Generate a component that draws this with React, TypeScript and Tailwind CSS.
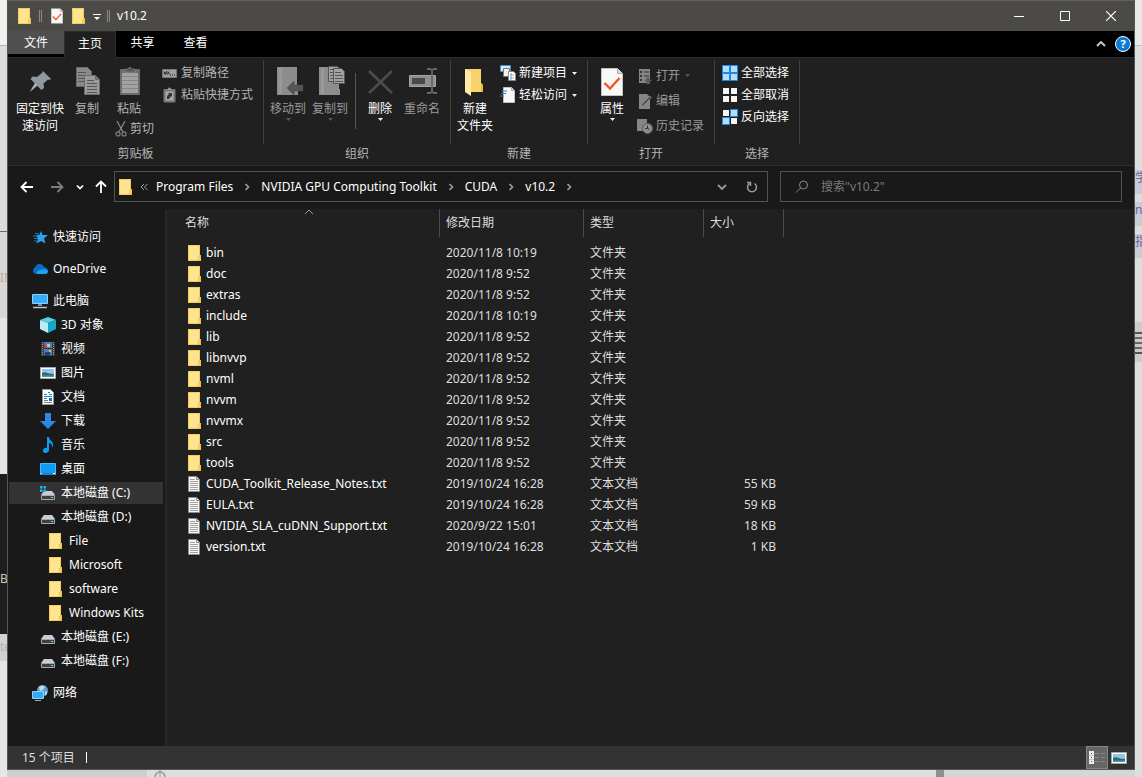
import React from 'react';
import { clsx } from 'clsx';

interface IconProps {
  className?: string;
}

function cn(...parts: (string | undefined)[]) {
  return clsx('shrink-0', parts);
}

/* ---------- Shared icons ---------- */

const FolderIcon = ({ className = 'w-4 h-4' }: IconProps) => (
  <svg viewBox="0 0 16 16" className={cn(className)}>
    <path d="M1 0h12v10h1v6H1z" fill="#ffe48f" />
    <path d="M1.500.5h11v15h-11z" fill="none" stroke="#f3cd55" />
    <path d="M11.500 15.500v-4l2-1v5z" fill="#fbd968" stroke="#e3b838" strokeWidth=".7" />
  </svg>
);

const TextFileIcon = ({ className = 'w-4 h-4' }: IconProps) => (
  <svg viewBox="0 0 16 16" className={cn(className)}>
    <path d="M1.500.5h8l3 3v12h-11z" fill="#f7f7f7" stroke="#8c8c8c" />
    <path d="M9.500.5v3h3" fill="#ddd" stroke="#8c8c8c" />
    <path d="M3 3.500h5M3 5.500h8M3 7.500h8M3 9.500h8M3 11.500h8M3 13.500h8" stroke="#a2a2a2" />
  </svg>
);

const CheckPageIcon = ({ className }: IconProps) => (
  <svg viewBox="0 0 22 28" className={cn(className)}>
    <path d="M.5.5h16l5 5v22H.5z" fill="#f8f8f8" stroke="#c4c4c4" />
    <path d="M16.500.5v5h5" fill="#ddd" stroke="#a9a9a9" />
    <path d="M3.500 15l5.500 5.500L18.500 10" fill="none" stroke="#f0591e" strokeWidth="2.400" />
  </svg>
);

const Caret = ({ className }: IconProps) => (
  <svg viewBox="0 0 5 3" className={cn('w-[5px] h-[3px]', className)}>
    <path d="M0 0h5L2.500 3z" fill="currentColor" />
  </svg>
);

const Chevron = ({ className }: IconProps) => (
  <svg viewBox="0 0 8 8" className={cn('w-2 h-2', className)}>
    <path d="M1 2.500l3 3 3-3" fill="none" stroke="currentColor" strokeWidth="1.700" />
  </svg>
);

/* ---------- Ribbon icons ---------- */

const PinIcon = () => (
  <svg viewBox="0 0 32 32" className="w-8 h-8">
    <path d="M19 5l8 8-2 1-1-.5-4.500 4 .5 4.500-2.500 2-5-5L6 25l2-3 3-4.500-4.500-4.500 2-2.500 4.500.5 5-4z" fill="#8d9aa5" />
    <path d="M11 17l2.500 2.500L6 26z" fill="#a5b0b8" />
  </svg>
);

const CopyIcon = () => (
  <svg viewBox="0 0 32 32" className="w-8 h-8">
    <g stroke="#6a6a6a">
      <path d="M5.500 1.500h11l4 4v15h-15z" fill="#8a8a8a" />
      <path d="M7 6.500h8M7 9.500h10M7 12.500h10M7 15.500h10" stroke="#555" />
      <path d="M13.500 9.500h11l4 4v15h-15z" fill="#9a9a9a" />
      <path d="M24.500 9.500v4h4" fill="#777" />
      <path d="M16 14.500h7M16 17.500h10M16 20.500h10M16 23.500h10M16 26.500h10" stroke="#555" />
    </g>
  </svg>
);

const PasteIcon = () => (
  <svg viewBox="0 0 28 32" className="w-7 h-8">
    <rect x="5" y="3" width="20" height="26" rx="1" fill="#6c6c6c" />
    <path d="M7 7h16v20H7z" fill="#a2a2a2" />
    <path d="M7 10.500h16M7 14.500h16M7 18.500h16M7 22.500h16" stroke="#868686" />
    <path d="M9 6l2-3h2l2-2 2 2h2l2 3z" fill="#555" stroke="#999" strokeWidth=".6" />
  </svg>
);

const ScissorsIcon = () => (
  <svg viewBox="0 0 12 16" className="w-3 h-4">
    <path d="M2 0l6 11M10 0L4 11" stroke="#8b8b8b" fill="none" strokeWidth="1.200" />
    <circle cx="3" cy="13" r="2" fill="none" stroke="#777" strokeWidth="1.300" />
    <circle cx="9" cy="13" r="2" fill="none" stroke="#777" strokeWidth="1.300" />
  </svg>
);

const CopyPathIcon = () => (
  <svg viewBox="0 0 16 16" className="w-4 h-4">
    <path d="M.5 4.500h14v8H.5z" fill="#a0a0a0" stroke="#777" />
    <path d="M2 6.500l1 3 1.500-3 1 3M6 6.500l1.500 3" stroke="#222" fill="none" />
    <path d="M8 10h1M10 10h1M12 10h1" stroke="#222" />
  </svg>
);

const PasteShortcutIcon = () => (
  <svg viewBox="0 0 16 16" className="w-4 h-4">
    <rect x="1.500" y="2" width="12" height="13.500" rx="1" fill="#777" />
    <path d="M3.500 4.500h8v9h-8z" fill="#aaa" />
    <path d="M5 3l2-2.500h1L10 3z" fill="#999" />
    <path d="M5 12V9l2-2-1-1h4v4L9 9l-2 3z" fill="#333" />
  </svg>
);

const MoveToIcon = () => (
  <svg viewBox="0 0 32 32" className="w-8 h-8">
    <path d="M5 1h20v22h1v6H5z" fill="#8d8d8d" />
    <path d="M7 2h3v26H7z" fill="#999" />
    <path d="M15 22l7-7v4h9v6h-9v4z" fill="#565656" stroke="#444" strokeWidth=".6" />
  </svg>
);

const CopyToIcon = () => (
  <svg viewBox="0 0 32 32" className="w-8 h-8">
    <path d="M5 1h20v22h1v6H5z" fill="#8d8d8d" />
    <path d="M7 2h3v26H7z" fill="#999" />
    <g stroke="#555">
      <path d="M14.500.5h9l2 3v12h-11z" fill="#a2a2a2" />
      <path d="M19.500 2.500h8l3 3v12h-11z" fill="#a2a2a2" />
      <path d="M16 3.500h3M16 6.500h3M16 9.500h3M16 12.500h3M21 6.500h6M21 9.500h8M21 12.500h8M21 15.500h8" />
    </g>
  </svg>
);

const DeleteIcon = () => (
  <svg viewBox="0 0 32 32" className="w-8 h-8">
    <path d="M5 5l23 22M28 5L5 27" stroke="#4c4c4c" strokeWidth="2.600" />
  </svg>
);

const RenameIcon = () => (
  <svg viewBox="0 0 32 32" className="w-8 h-8">
    <path d="M3.500 9.500h26v11h-26z" fill="#8f8f8f" stroke="#a3a3a3" />
    <path d="M6 12h13v6H6z" fill="#4a4a4a" />
    <path d="M21 3h3l2 1 2-1h3M26 4v22M21 27h3l2-1 2 1h3" fill="none" stroke="#686868" strokeWidth="1.800" />
  </svg>
);

const NewFolderIcon = () => (
  <svg viewBox="0 0 32 32" className="w-8 h-8">
    <path d="M6 3h16v14l2 2v7H11z" fill="#f8d36b" />
    <path d="M6 3l6 3v24l-6-4z" fill="#ffe9a6" />
    <path d="M22 17l2 2v7h-2z" fill="#e6b93f" />
  </svg>
);

const NewItemIcon = () => (
  <svg viewBox="0 0 16 16" className="w-4 h-4">
    <path d="M.5.500h10v6H.5z" fill="#d9ecf8" stroke="#3f93c8" />
    <path d="M3.500 3.500h6v8h-6z" fill="#f2f2f2" stroke="#777" />
    <path d="M8.500 6.500h5l2 2v7h-7z" fill="#fff" stroke="#888" />
    <path d="M10 10h4M10 13h4" stroke="#d08a9c" />
    <path d="M11 8v7" stroke="#7ba3d8" />
  </svg>
);

const EasyAccessIcon = () => (
  <svg viewBox="0 0 16 16" className="w-4 h-4">
    <path d="M3.500.5h8l3 3v12h-11z" fill="#f8f8f8" stroke="#c0c0c0" />
    <path d="M11.500.5v3h3" fill="#ccc" stroke="#aaa" />
    <path d="M2 4h5M1 6.500h5M0 9h4" stroke="#2b7fc6" strokeWidth="1.200" />
  </svg>
);

const OpenIcon = () => (
  <svg viewBox="0 0 16 16" className="w-4 h-4">
    <path d="M2 1h11v14H2z" fill="#858585" />
    <path d="M3 3h2v2H3zM3 7h2v2H3zM3 11h2v2H3zM7 3.500h5v1H7zM7 7.500h5v1H7z" fill="#333" />
    <path d="M9 16v-3h-2l4-4 4 4h-2v3z" fill="#5d5d5d" />
  </svg>
);

const EditIcon = () => (
  <svg viewBox="0 0 16 16" className="w-4 h-4">
    <path d="M2 1h8l3 3v12H2z" fill="#858585" />
    <path d="M4 14l1-3 8-8 1.500 1.500-8 8z" fill="#4b4b4b" stroke="#a5a5a5" strokeWidth=".5" />
  </svg>
);

const HistoryIcon = () => (
  <svg viewBox="0 0 16 16" className="w-4 h-4">
    <path d="M0 1h10v12H0z" fill="#858585" />
    <circle cx="10.500" cy="10.500" r="5" fill="#8f8f8f" stroke="#5c5c5c" />
    <path d="M10.500 7.500v3l2 1M8 10.500h2" fill="none" stroke="#333" />
  </svg>
);

// One 8px tile per quadrant, a selected tile gets the blue frame
const SelectIcon = ({ on }: { on: boolean[] }) => (
  <svg viewBox="0 0 16 16" className="w-4 h-4 shrink-0">
    {on.map((picked, i) => {
      const x = (i % 2) * 8;
      const y = Math.floor(i / 2) * 8;
      return (
        <g key={i}>
          {picked && <rect x={x} y={y} width="8" height="8" fill="#1f87dc" />}
          <rect x={x + 1} y={y + 1} width="6" height="6" fill={picked ? '#b5dcf8' : '#f5f5f5'} />
        </g>
      );
    })}
  </svg>
);

/* ---------- Sidebar icons ---------- */

const StarIcon = () => (
  <svg viewBox="0 0 16 16" className="w-4 h-4">
    <path d="M9 2l1.500 4L16 6l-4 3.500 1.500 5L9 12l-4.500 2.500L6 10 4 6l3.500-.2z" fill="#2ba3f5" />
    <path d="M3 4.500h4M1 7h5M2 9.500h4M2 12h3" stroke="#1a78c4" />
  </svg>
);

const CloudIcon = () => (
  <svg viewBox="0 0 16 16" className="w-4 h-4">
    <path d="M3.500 13A3.500 3.500 0 013 6.500 4.800 4.800 0 0112 6c2.500.5 4 2 4 4s-1.500 3-3 3z" fill="#0a6cc4" />
    <path d="M5 13c-1-1 0-3 3-4 3-1.500 6-1 8 1 0 2-1.500 3-3 3z" fill="#27a0ec" />
  </svg>
);

const PcIcon = () => (
  <svg viewBox="0 0 16 16" className="w-4 h-4">
    <path d="M.5 1.500h15v9H.5z" fill="#35aaf7" stroke="#8ed1fb" />
    <path d="M6 11h4v2H6z" fill="#7c8b97" />
    <path d="M1 14.500h14" stroke="#b9c5ce" strokeWidth="1.500" />
  </svg>
);

const CubeIcon = () => (
  <svg viewBox="0 0 16 16" className="w-4 h-4">
    <path d="M8 0l8 3-8 3-8-3z" fill="#58d3e3" />
    <path d="M0 3l8 3v10l-8-4z" fill="#b5eef3" />
    <path d="M16 3L8 6v10l8-4z" fill="#16a6c6" />
  </svg>
);

const VideoIcon = () => (
  <svg viewBox="0 0 16 16" className="w-4 h-4">
    <path d="M1 1h14v14H1z" fill="#3c3c3c" />
    <path d="M2.500 1v14M13.500 1v14" stroke="#999" strokeDasharray="1 1" />
    <path d="M4 1h8v6H4zM4 8h8v6H4z" fill="#3f7fd6" />
    <path d="M4 4h3v3H4z" fill="#c33b4d" />
    <path d="M7 3h3v3H7z" fill="#f2c531" />
    <path d="M5 11h5v3H5z" fill="#25406c" />
    <path d="M9 9h2v2H9z" fill="#e6bd3a" />
  </svg>
);

const PictureIcon = () => (
  <svg viewBox="0 0 16 16" className="w-4 h-4">
    <path d="M.5 2.500h15v11H.5z" fill="#fff" stroke="#a9a9a9" />
    <path d="M2 4h12v8H2z" fill="#8fc4f5" />
    <path d="M2 8c3-2 5 1 12 1v3H2z" fill="#2f6f5f" />
    <path d="M2 10.500h12V12H2z" fill="#5b91b5" />
  </svg>
);

const DocIcon = () => (
  <svg viewBox="0 0 16 16" className="w-4 h-4">
    <path d="M2.500.5h8l3 3v12h-11z" fill="#fff" stroke="#999" />
    <path d="M8 3.500h2M4 5.500h3M9 5.500h3M4 7.500h8M4 9.500h3" stroke="#2180cc" />
    <path d="M9 9h3v3H9z" fill="#2a72a8" />
    <path d="M4 11.500h4M4 13.500h8" stroke="#777" />
  </svg>
);

const DownloadIcon = () => (
  <svg viewBox="0 0 16 16" className="w-4 h-4">
    <path d="M5 0h6v8h5l-8 8-8-8h5z" fill="#2d87e0" />
  </svg>
);

const MusicIcon = () => (
  <svg viewBox="0 0 16 16" className="w-4 h-4">
    <path d="M7 0h2c0 4 5 4 4 9-.5 1-1 2-1 1 0-3-1-4-3-4v7c0 2-2 3-4 3S2 13 4 11.500c1-.8 2-1 3-.500z" fill="#109cf5" />
  </svg>
);

const DesktopIcon = () => (
  <svg viewBox="0 0 16 16" className="w-4 h-4">
    <path d="M.5 2.500h15v11H.5z" fill="#109cf5" stroke="#47b8fb" />
    <path d="M1 13h14" stroke="#0a5da0" />
    <path d="M1 12.500h1M13 12.500h2" stroke="#fff" />
  </svg>
);

const DriveIcon = ({ system }: { system?: boolean }) => (
  <svg viewBox="0 0 16 16" className="w-4 h-4">
    <path d="M4 6h8l3 4H1z" fill="#c9ccd0" />
    <path d="M1.500 10.500h13v4h-13z" fill="#3e4144" stroke="#a7abae" />
    <path d="M11 12.500h2" stroke="#4ff06a" strokeWidth="1.200" />
    {system && <path d="M0 1h2.500v2.500H0zM3.500 1H6v2.500H3.500zM0 4.500h2.500V7H0zM3.500 4.500H6V7H3.500z" fill="#22b3f0" />}
  </svg>
);

const NetworkIcon = () => (
  <svg viewBox="0 0 16 16" className="w-4 h-4">
    <circle cx="10.500" cy="5.500" r="5.500" fill="#5f9fc4" />
    <path d="M7 2c2-2 5-1 6 0l-2 3-3 1zM13 7l2-1v3l-2 2z" fill="#b8dbe8" />
    <path d="M.5 6.500h11v7H.5z" fill="#35aaf7" stroke="#8ed1fb" />
    <path d="M3 15.500h6" stroke="#9db2c0" />
  </svg>
);

/* ---------- Data ---------- */

const files = [
  { name: 'bin', date: '2020/11/8 10:19', folder: true },
  { name: 'doc', date: '2020/11/8 9:52', folder: true },
  { name: 'extras', date: '2020/11/8 9:52', folder: true },
  { name: 'include', date: '2020/11/8 10:19', folder: true },
  { name: 'lib', date: '2020/11/8 9:52', folder: true },
  { name: 'libnvvp', date: '2020/11/8 9:52', folder: true },
  { name: 'nvml', date: '2020/11/8 9:52', folder: true },
  { name: 'nvvm', date: '2020/11/8 9:52', folder: true },
  { name: 'nvvmx', date: '2020/11/8 9:52', folder: true },
  { name: 'src', date: '2020/11/8 9:52', folder: true },
  { name: 'tools', date: '2020/11/8 9:52', folder: true },
  { name: 'CUDA_Toolkit_Release_Notes.txt', date: '2019/10/24 16:28', size: '55 KB' },
  { name: 'EULA.txt', date: '2019/10/24 16:28', size: '59 KB' },
  { name: 'NVIDIA_SLA_cuDNN_Support.txt', date: '2020/9/22 15:01', size: '18 KB' },
  { name: 'version.txt', date: '2019/10/24 16:28', size: '1 KB' },
];

const places = [
  [{ label: '快速访问', icon: <StarIcon />, depth: 0 }],
  [{ label: 'OneDrive', icon: <CloudIcon />, depth: 0 }],
  [
    { label: '此电脑', icon: <PcIcon />, depth: 0 },
    { label: '3D 对象', icon: <CubeIcon />, depth: 1 },
    { label: '视频', icon: <VideoIcon />, depth: 1 },
    { label: '图片', icon: <PictureIcon />, depth: 1 },
    { label: '文档', icon: <DocIcon />, depth: 1 },
    { label: '下载', icon: <DownloadIcon />, depth: 1 },
    { label: '音乐', icon: <MusicIcon />, depth: 1 },
    { label: '桌面', icon: <DesktopIcon />, depth: 1 },
    { label: '本地磁盘 (C:)', icon: <DriveIcon system />, depth: 1, active: true },
    { label: '本地磁盘 (D:)', icon: <DriveIcon />, depth: 1 },
    { label: 'File', icon: <FolderIcon />, depth: 2 },
    { label: 'Microsoft', icon: <FolderIcon />, depth: 2 },
    { label: 'software', icon: <FolderIcon />, depth: 2 },
    { label: 'Windows Kits', icon: <FolderIcon />, depth: 2 },
    { label: '本地磁盘 (E:)', icon: <DriveIcon />, depth: 1 },
    { label: '本地磁盘 (F:)', icon: <DriveIcon />, depth: 1 },
  ],
  [{ label: '网络', icon: <NetworkIcon />, depth: 0 }],
];

const indents = ['pl-[23px]', 'pl-[31px]', 'pl-[39px]'];
const crumbs = ['Program Files', 'NVIDIA GPU Computing Toolkit', 'CUDA', 'v10.2'];

/* ---------- Ribbon parts ---------- */

interface GroupProps {
  label: string;
  className: string;
  children: React.ReactNode;
}

const Group = ({ label, className, children }: GroupProps) => (
  <section className="flex shrink-0">
    <div className={clsx('flex flex-col', className)}>
      <div className="flex flex-1">{children}</div>
      <div className="text-center leading-5 pb-px text-[#b4b4b4]">{label}</div>
    </div>
    <div className="w-px h-[84px] mt-[2px] bg-[#404040]" />
  </section>
);

interface BigButtonProps {
  icon: React.ReactNode;
  lines: string[];
  className: string;
  caret?: string;
}

const BigButton = ({ icon, lines, className, caret }: BigButtonProps) => (
  <button className={clsx('flex flex-col items-center pt-2 whitespace-nowrap', className)}>
    {icon}
    <span className="mt-[2px] leading-[17px]">
      {lines.map((line) => (
        <span key={line} className="block">{line}</span>
      ))}
    </span>
    {caret && <Caret className={clsx('mt-px', caret)} />}
  </button>
);

interface SmallButtonProps {
  icon: React.ReactNode;
  label: string;
  className: string;
  caret?: string;
}

const SmallButton = ({ icon, label, className, caret }: SmallButtonProps) => (
  <button className={clsx('flex items-center gap-[3px] whitespace-nowrap', className)}>
    {icon}
    {label}
    {caret && <Caret className={clsx('ml-[2px]', caret)} />}
  </button>
);

const Ribbon = () => (
  <div className="flex h-[109px] border-y border-[#2e2e2e] bg-[#202020] overflow-hidden">
    <Group label="剪贴板" className="w-[255px]">
      <BigButton icon={<PinIcon />} lines={['固定到快', '速访问']} className="w-12 ml-2" />
      <BigButton icon={<CopyIcon />} lines={['复制']} className="w-[42px] ml-[2px] text-[#b4b4b4]" />
      <div className="ml-[7px] w-10 text-[#b4b4b4]">
        <BigButton icon={<PasteIcon />} lines={['粘贴']} className="w-7" />
        <SmallButton icon={<ScissorsIcon />} label="剪切" className="h-5 mt-[2px]" />
      </div>
      <div className="ml-[7px] pt-1 text-[#b4b4b4]">
        <SmallButton icon={<CopyPathIcon />} label="复制路径" className="h-[22px]" />
        <SmallButton icon={<PasteShortcutIcon />} label="粘贴快捷方式" className="h-[22px]" />
      </div>
    </Group>
    <Group label="组织" className="w-[186px]">
      <BigButton icon={<MoveToIcon />} lines={['移动到']} className="w-[42px] ml-[3px] text-[#999]" caret="text-[#555]" />
      <BigButton icon={<CopyToIcon />} lines={['复制到']} className="w-[42px] text-[#999]" caret="text-[#555]" />
      <div className="w-px h-[56px] mt-[15px] ml-1 bg-[#555]" />
      <BigButton icon={<DeleteIcon />} lines={['删除']} className="w-[42px] ml-[3px]" caret="text-[#eee]" />
      <BigButton icon={<RenameIcon />} lines={['重命名']} className="w-[42px] text-[#999]" />
    </Group>
    <Group label="新建" className="w-[136px]">
      <BigButton icon={<NewFolderIcon />} lines={['新建', '文件夹']} className="w-[42px] ml-[3px]" />
      <div className="ml-1 pt-1">
        <SmallButton icon={<NewItemIcon />} label="新建项目" className="h-[22px]" caret="text-[#eee]" />
        <SmallButton icon={<EasyAccessIcon />} label="轻松访问" className="h-[22px]" caret="text-[#eee]" />
      </div>
    </Group>
    <Group label="打开" className="w-[126px]">
      <BigButton icon={<CheckPageIcon className="w-[22px] h-8" />} lines={['属性']} className="w-9 ml-[6px]" caret="text-[#eee]" />
      <div className="ml-[7px] pt-[5px] text-[#999]">
        <SmallButton icon={<OpenIcon />} label="打开" className="h-[25px]" caret="text-[#555]" />
        <SmallButton icon={<EditIcon />} label="编辑" className="h-[25px]" />
        <SmallButton icon={<HistoryIcon />} label="历史记录" className="h-[25px]" />
      </div>
    </Group>
    <Group label="选择" className="w-[84px]">
      <div className="ml-[7px] pt-1">
        <SmallButton icon={<SelectIcon on={[true, true, true, true]} />} label="全部选择" className="h-[22px]" />
        <SmallButton icon={<SelectIcon on={[false, false, false, false]} />} label="全部取消" className="h-[22px]" />
        <SmallButton icon={<SelectIcon on={[false, true, true, false]} />} label="反向选择" className="h-[22px]" />
      </div>
    </Group>
  </div>
);

/* ---------- Window chrome ---------- */

const TitleBar = () => (
  <header className="flex items-center h-[31px] border-t border-[#62615d] bg-[#4b4a46]">
    <FolderIcon className="w-4 h-4 ml-[9px]" />
    <div className="w-[3px] h-3 mx-[6px] border-x border-[#8a8985]" />
    <button aria-label="属性" className="ml-[3px]"><CheckPageIcon className="w-3 h-4" /></button>
    <button aria-label="新建文件夹" className="ml-2"><FolderIcon /></button>
    <button aria-label="自定义快速访问工具栏" className="ml-[6px]">
      <svg viewBox="0 0 8 8" className="w-2 h-2">
        <path d="M0 2.500h8" stroke="#fff" />
        <path d="M1 5h6L4 8z" fill="#fff" />
      </svg>
    </button>
    <div className="w-[3px] h-3 mx-[6px] border-x border-[#8a8985]" />
    <h1 className="flex-1 pl-px">v10.2</h1>
    <button aria-label="最小化" className="w-[46px] h-full flex items-center justify-center">
      <svg viewBox="0 0 10 10" className="w-[10px] h-[10px]"><path d="M0 5.500h10" stroke="#fff" /></svg>
    </button>
    <button aria-label="最大化" className="w-[46px] h-full flex items-center justify-center">
      <svg viewBox="0 0 10 10" className="w-[10px] h-[10px]"><path d="M.5.5h9v9h-9z" fill="none" stroke="#fff" /></svg>
    </button>
    <button aria-label="关闭" className="w-[46px] h-full flex items-center justify-center">
      <svg viewBox="0 0 10 10" className="w-[10px] h-[10px]"><path d="M0 0l10 10M10 0L0 10" stroke="#fff" strokeWidth="1.200" /></svg>
    </button>
  </header>
);

const Tabs = () => (
  <nav className="flex h-[26px] bg-black">
    <button className="w-14 h-[23px] bg-[#4f4f4f]">文件</button>
    <button className="w-[52px] h-[27px] pb-[3px] border border-b-0 border-[#2e2e2e] bg-[#202020] relative z-10">主页</button>
    <button className="w-[53px] h-[24px]">共享</button>
    <button className="w-[53px] h-[24px]">查看</button>
    <div className="flex-1" />
    <button aria-label="最小化功能区" className="mr-[9px] text-[#c4c4c4]">
      <svg viewBox="0 0 10 6" className="w-[10px] h-[6px]">
        <path d="M1 5l4-4 4 4" fill="none" stroke="currentColor" strokeWidth="2" />
      </svg>
    </button>
    <button aria-label="帮助" className="mr-[3px] self-center w-4 h-4 rounded-full border border-white bg-[#0b7bd8] text-[11px] leading-[14px] font-bold">?</button>
  </nav>
);

const NavBar = () => (
  <div className="flex items-center h-[43px] pr-3 pb-[2px] bg-[#191919]">
    <div className="flex items-center w-[106px] shrink-0">
      <button aria-label="后退" className="ml-3">
        <svg viewBox="0 0 14 14" className="w-[14px] h-[14px]">
          <path d="M13 7H2M6.500 2L1.500 7l5 5" fill="none" stroke="#fff" strokeWidth="1.800" />
        </svg>
      </button>
      <button aria-label="前进" className="ml-4">
        <svg viewBox="0 0 14 14" className="w-[14px] h-[14px]">
          <path d="M1 7h11M7.500 2l5 5-5 5" fill="none" stroke="#7d7d7d" strokeWidth="1.800" />
        </svg>
      </button>
      <button aria-label="最近浏览的位置" className="ml-3"><Chevron /></button>
      <button aria-label="上移" className="ml-[10px]">
        <svg viewBox="0 0 14 14" className="w-[14px] h-[14px]">
          <path d="M7 13V2M2 6.500l5-5 5 5" fill="none" stroke="#fff" strokeWidth="1.800" />
        </svg>
      </button>
    </div>
    <div className="flex flex-1 items-center h-[31px] border border-[#535353] min-w-0">
      <FolderIcon className="w-4 h-4 ml-[3px]" />
      <svg viewBox="0 0 8 8" className="w-2 h-2 ml-[6px] mr-2 shrink-0 text-[#9a9a9a]">
        <path d="M4 1L1 4l3 3M7.500 1l-3 3 3 3" fill="none" stroke="currentColor" />
      </svg>
      {crumbs.map((crumb) => (
        <React.Fragment key={crumb}>
          <button className="whitespace-nowrap">{crumb}</button>
          <Chevron className="mx-[10px] -rotate-90 text-[#9a9a9a]" />
        </React.Fragment>
      ))}
      <div className="flex-1" />
      <button aria-label="以前的位置" className="w-[30px] flex justify-center text-[#9a9a9a]">
        <svg viewBox="0 0 10 8" className="w-[10px] h-2">
          <path d="M1 2l4 4 4-4" fill="none" stroke="currentColor" strokeWidth="1.800" />
        </svg>
      </button>
      <button aria-label="刷新" className="w-[30px] flex justify-center text-[#9a9a9a]">
        <svg viewBox="0 0 12 12" className="w-3 h-3">
          <path d="M8.500 2.500A4.500 4.500 0 113.500 2.500M1 1.500h3.500V5" fill="none" stroke="currentColor" strokeWidth="1.500" />
        </svg>
      </button>
    </div>
    <label className="flex items-center w-[342px] h-[31px] ml-3 border border-[#535353]">
      <svg viewBox="0 0 14 14" className="w-[14px] h-[14px] ml-[14px] text-[#8a8a8a]">
        <circle cx="8.500" cy="5" r="4" fill="none" stroke="currentColor" />
        <path d="M5.500 8L1 12.500" stroke="currentColor" />
      </svg>
      <input type="text" aria-label="搜索" placeholder={'搜索"v10.2"'} className="flex-1 min-w-0 ml-3 bg-transparent outline-none placeholder:text-[#7a7a7a]" />
    </label>
  </div>
);

const Sidebar = () => (
  <aside className="w-[159px] shrink-0 pt-4 border-r-2 border-[#282828] bg-[#191919]">
    {places.map((group, i) => (
      <ul key={i} className="mb-2">
        {group.map((place) => (
          <li key={place.label} className="h-6 py-px pl-px pr-[2px]">
            <button
              className={clsx(
                'flex items-center gap-[5px] w-full h-[22px] whitespace-nowrap',
                indents[place.depth],
                place.active && 'bg-[#333]',
              )}
            >
              <span className="w-4 h-4 shrink-0">{place.icon}</span>
              {place.label}
            </button>
          </li>
        ))}
      </ul>
    ))}
  </aside>
);

const headCell = 'h-7 flex items-center border-r border-[#4c4c4c]';

const FileTable = () => (
  <main className="flex-1 min-w-0 bg-[#202020]">
    <table className="table-fixed w-[617px] border-collapse whitespace-nowrap text-[#dedede]">
      <thead>
        <tr className="h-[33px] align-top text-left">
          <th className="w-[273px] p-0 font-normal relative">
            <svg viewBox="0 0 10 6" className="absolute left-[137px] top-0 w-[10px] h-[6px]">
              <path d="M1 5l4-4 4 4" fill="none" stroke="#9a9a9a" />
            </svg>
            <div className={clsx(headCell, 'pl-[18px]')}>名称</div>
          </th>
          <th className="w-36 p-0 font-normal"><div className={clsx(headCell, 'pl-[6px]')}>修改日期</div></th>
          <th className="w-[120px] p-0 font-normal"><div className={clsx(headCell, 'pl-[6px]')}>类型</div></th>
          <th className="w-20 p-0 font-normal"><div className={clsx(headCell, 'pl-[6px]')}>大小</div></th>
        </tr>
      </thead>
      <tbody>
        {files.map((file) => (
          <tr key={file.name} className="h-[21px]">
            <td className="p-0 pl-5 text-white">
              <div className="flex items-center gap-[3px]">
                {file.folder ? <FolderIcon /> : <TextFileIcon />}
                {file.name}
              </div>
            </td>
            <td className="p-0 pl-[6px]">{file.date}</td>
            <td className="p-0 pl-[6px]">{file.folder ? '文件夹' : '文本文档'}</td>
            <td className="p-0 pr-2 text-right">{file.size}</td>
          </tr>
        ))}
      </tbody>
    </table>
  </main>
);

const StatusBar = () => (
  <footer className="flex items-center h-[23px] pl-[14px] pr-[7px] bg-[#333] text-[#dedede]">
    <span>15 个项目</span>
    <div className="w-px h-[11px] ml-[11px] bg-white" />
    <div className="flex-1" />
    <button aria-label="详细信息" className="flex items-center justify-center w-[22px] h-[23px] border border-[#858585] bg-[#666]">
      <svg viewBox="0 0 16 13" className="w-4 h-[13px]">
        <path d="M0 0h5v13H0z" fill="#eee" />
        <path d="M0 4.500h5M0 8.500h5" stroke="#aaa" strokeWidth=".6" />
        <path d="M2 2h1v1H2z" fill="#333" />
        <path d="M2 6h1v1H2z" fill="#2767c4" />
        <path d="M2 10h1v1H2z" fill="#c02020" />
        <path d="M6 2.500h4M12 2.500h4M6 6.500h4M12 6.500h4M6 10.500h4M12 10.500h4" stroke="#888" />
      </svg>
    </button>
    <button aria-label="大缩略图" className="ml-[3px]"><PictureIcon /></button>
  </footer>
);

/* ---------- Page behind the window ---------- */

const LeftEdge = () => (
  <div className="w-[7px] shrink-0 flex flex-col overflow-hidden text-[#b0b0b0]">
    <div className="h-[46px] bg-[#f0f0f0] border-b border-[#b5b5b5]" />
    <div className="h-[186px] bg-[#dcdcdc] border-b border-[#666]" />
    <div className="h-[86px] pt-[38px] bg-[#d6d6d6] text-[#c2a9a0]">IN</div>
    <div className="h-[156px] bg-[#e6e6e6]" />
    <div className="h-[160px] pt-[97px] bg-[#1e1e1e] text-[#d8c9a8]">B</div>
    <div className="h-[27px] pt-[5px] bg-[#d2d2d2]">te</div>
    <div className="flex-1 bg-[#e6e6e6]" />
  </div>
);

const RightEdge = () => (
  <div className="w-[7px] shrink-0 flex flex-col overflow-hidden text-[#5b6b96]">
    <div className="h-[46px] bg-[#e9e9e9] border-b border-[#bdbdbd]" />
    <div className="h-[124px] bg-[#dedede]" />
    <div className="h-6 bg-[#c8ccd6]">学</div>
    <div className="h-2 bg-[#dedede]" />
    <div className="h-6 bg-[#c8ccd6]">na</div>
    <div className="h-2 bg-[#dedede]" />
    <div className="h-6 bg-[#c8ccd6]">指</div>
    <div className="h-16 bg-[#dedede]" />
    <div className="h-10 flex flex-col gap-[3px] pt-[10px] bg-[#cbcbcb]">
      <div className="h-[2px] bg-[#555]" />
      <div className="h-[2px] bg-[#666]" />
      <div className="h-[2px] bg-[#666]" />
      <div className="h-[2px] bg-[#666]" />
      <div className="h-[2px] bg-[#555]" />
    </div>
    <div className="flex-1 bg-[#dedede]" />
  </div>
);

export default function App() {
  return (
    <div className="flex min-h-screen bg-[#dcdcdc] text-xs text-white font-['Noto_Sans','Noto_Sans_CJK_SC',sans-serif]">
      <LeftEdge />
      <div className="flex flex-col flex-1 min-w-0">
        <div className="flex flex-col flex-1 border-x border-b border-[#555]">
          <TitleBar />
          <Tabs />
          <Ribbon />
          <NavBar />
          <div className="flex flex-1">
            <Sidebar />
            <FileTable />
          </div>
          <StatusBar />
        </div>
        <div className="flex h-[7px] overflow-hidden">
          <div className="w-[140px] bg-[#cfcfcf]" />
          <div className="flex-1 bg-[#dedede]">
            <svg viewBox="0 0 14 7" className="w-[14px] h-[7px] ml-[6px]">
              <circle cx="7" cy="7" r="5" fill="none" stroke="#9a9a9a" strokeWidth="1.500" />
              <path d="M7 0v7" stroke="#9a9a9a" />
            </svg>
          </div>
          <div className="w-2 bg-[#8f8f8f]" />
          <div className="w-[191px] bg-[#d6d6d6]" />
        </div>
      </div>
      <RightEdge />
    </div>
  );
}
